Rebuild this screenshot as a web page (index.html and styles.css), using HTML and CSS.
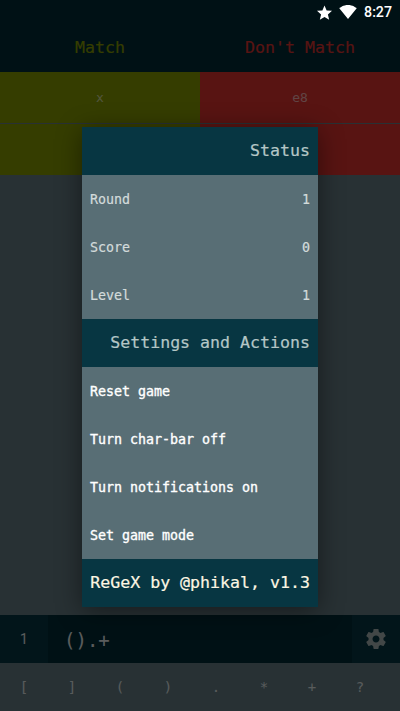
FILE: index.html
```html
<!DOCTYPE html>
<html lang="en">
<head>
<meta charset="UTF-8">
<meta name="viewport" content="width=device-width, initial-scale=1.0">
<title>ReGeX</title>
<link rel="stylesheet" href="styles.css">
</head>
<body>

<div class="app">
  <!-- Game screen -->
  <div class="top-bar">
    <div class="status-gap"></div>
    <div class="titles">
      <div class="title-match">Match</div>
      <div class="title-nomatch">Don't Match</div>
    </div>
  </div>

  <div class="rows">
    <div class="row">
      <div class="cell cell-match">x</div>
      <div class="cell cell-nomatch">e8</div>
    </div>
    <div class="row">
      <div class="cell cell-match"></div>
      <div class="cell cell-nomatch"></div>
    </div>
  </div>

  <div class="input-bar">
    <div class="round-num">1</div>
    <div class="input-text">().+</div>
    <div class="gear-box">
      <svg class="gear" viewBox="0 0 24 24"><path d="M19.43 12.98c.04-.32.07-.64.07-.98s-.03-.66-.07-.98l2.11-1.65c.19-.15.24-.42.12-.64l-2-3.46c-.12-.22-.39-.3-.61-.22l-2.49 1c-.52-.4-1.08-.73-1.69-.98l-.38-2.65C14.46 2.18 14.25 2 14 2h-4c-.25 0-.46.18-.49.42l-.38 2.65c-.61.25-1.17.59-1.69.98l-2.49-1c-.23-.09-.49 0-.61.22l-2 3.46c-.13.22-.07.49.12.64l2.11 1.65c-.04.32-.07.65-.07.98s.03.66.07.98l-2.11 1.65c-.19.15-.24.42-.12.64l2 3.46c.12.22.39.3.61.22l2.49-1c.52.4 1.08.73 1.69.98l.38 2.65c.03.24.24.42.49.42h4c.25 0 .46-.18.49-.42l.38-2.65c.61-.25 1.17-.59 1.69-.98l2.49 1c.23.09.49 0 .61-.22l2-3.46c.12-.22.07-.49-.12-.64l-2.11-1.65zM12 15.5c-1.93 0-3.5-1.57-3.5-3.5s1.57-3.5 3.5-3.5 3.5 1.57 3.5 3.5-1.57 3.5-3.5 3.5z"/></svg>
    </div>
  </div>

  <div class="char-bar">
    <span>[</span><span>]</span><span>(</span><span>)</span><span>.</span><span>*</span><span>+</span><span>?</span>
  </div>

  <!-- Dim layer and menu -->
  <div class="overlay"></div>

  <div class="menu">
    <div class="menu-head">Status</div>
    <div class="menu-row"><span>Round</span><span>1</span></div>
    <div class="menu-row"><span>Score</span><span>0</span></div>
    <div class="menu-row"><span>Level</span><span>1</span></div>
    <div class="menu-head">Settings and Actions</div>
    <div class="menu-row menu-action">Reset game</div>
    <div class="menu-row menu-action">Turn char-bar off</div>
    <div class="menu-row menu-action">Turn notifications on</div>
    <div class="menu-row menu-action">Set game mode</div>
    <div class="menu-foot">ReGeX by @phikal, v1.3</div>
  </div>

  <!-- Android status bar -->
  <div class="status-bar">
    <svg class="icon-star" viewBox="0 0 24 24"><path d="M12 2l3 7.100 7.600.6-5.800 5 1.800 7.500L12 18.200l-6.600 4 1.800-7.500-5.800-5 7.600-.6z"/></svg>
    <svg class="icon-wifi" viewBox="0 0 18 14"><path d="M9 14L.3 3.200C1.200 2.500 4.400 0 9 0s7.800 2.500 8.700 3.200z"/></svg>
    <span class="clock">8:27</span>
  </div>
</div>

</body>
</html>
```

FILE: styles.css
```css
body {
  margin: 0;
  background: #000;
  font-family: 'DejaVu Sans Mono', monospace;
}

.app {
  position: relative;
  width: 400px;
  height: 711px;
  overflow: hidden;
  background: #657b83;
  display: flex;
  flex-direction: column;
}

/* Top of the game screen */
.top-bar {
  background: #002b36;
}

.status-gap {
  height: 24px;
}

.titles {
  display: flex;
  height: 47px;
  padding-bottom: 1px;
  align-items: center;
  font-size: 16.6px;
  text-align: center;
  -webkit-text-stroke: 0.2px;
}

.titles div {
  flex: 1;
}

.title-match { color: #859900; }
.title-nomatch { color: #dc322f; }

.rows {
  flex: 1;
}

.row {
  display: flex;
  height: 51px;
  border-bottom: 1px solid #657b83;
}

.cell {
  flex: 1;
  display: flex;
  align-items: center;
  justify-content: center;
  font-size: 13px;
  color: rgba(255, 255, 255, 0.6);
}

.cell-match { background: #859900; }
.cell-nomatch { background: #dc322f; }

/* Input */
.input-bar {
  display: flex;
  height: 48px;
  background: #002b36;
  color: #e0e6e6;
}

.round-num {
  width: 48px;
  background: #073642;
  display: flex;
  align-items: center;
  justify-content: center;
  font-size: 14px;
  font-family: Roboto, sans-serif;
}

.input-text {
  flex: 1;
  padding-left: 16px;
  font-size: 19px;
  line-height: 50px;
  font-weight: 300;
}

.gear-box {
  width: 48px;
  background: #073642;
  display: flex;
  align-items: center;
  justify-content: center;
}

.gear {
  width: 24px;
  height: 24px;
  fill: #a6b2b2;
}

.char-bar {
  display: flex;
  height: 48px;
  align-items: center;
  font-size: 14px;
  color: #dde3e3;
}

.char-bar span {
  width: 48px;
  text-align: center;
}

/* Dim layer */
.overlay {
  position: absolute;
  top: 0;
  left: 0;
  width: 100%;
  height: 100%;
  background: rgba(0, 0, 0, 0.6);
}

/* Menu dialog */
.menu {
  position: absolute;
  top: 127px;
  left: 82px;
  width: 236px;
  background: #586e75;
  box-shadow: 0 4px 24px rgba(0, 0, 0, 0.45);
}

.menu-head, .menu-foot {
  height: 48px;
  line-height: 48px;
  padding: 0 8px;
  background: #073642;
  font-size: 16.6px;
  text-align: right;
  white-space: nowrap;
  -webkit-text-stroke: 0.2px;
}

.menu-head { color: #b4c6c6; }
.menu-foot { color: #fdf6e3; }

.menu-row {
  height: 48px;
  padding: 0 8px;
  display: flex;
  justify-content: space-between;
  align-items: center;
  font-size: 13.3px;
  color: #d3dbdb;
  -webkit-text-stroke: 0.2px;
}

.menu-action {
  color: #fff;
  -webkit-text-stroke: 0.35px;
}

/* Status bar */
.status-bar {
  position: absolute;
  top: 0;
  left: 0;
  right: 0;
  height: 24px;
  display: flex;
  align-items: center;
  justify-content: flex-end;
  color: #fff;
  font-family: Roboto, sans-serif;
  font-size: 14.2px;
  font-weight: 500;
}

.icon-star {
  width: 17px;
  height: 17px;
  fill: #fff;
  margin-right: 6px;
}

.icon-wifi {
  width: 18px;
  height: 14px;
  fill: #fff;
  margin-right: 7px;
}

.clock {
  margin-right: 8px;
}
```
